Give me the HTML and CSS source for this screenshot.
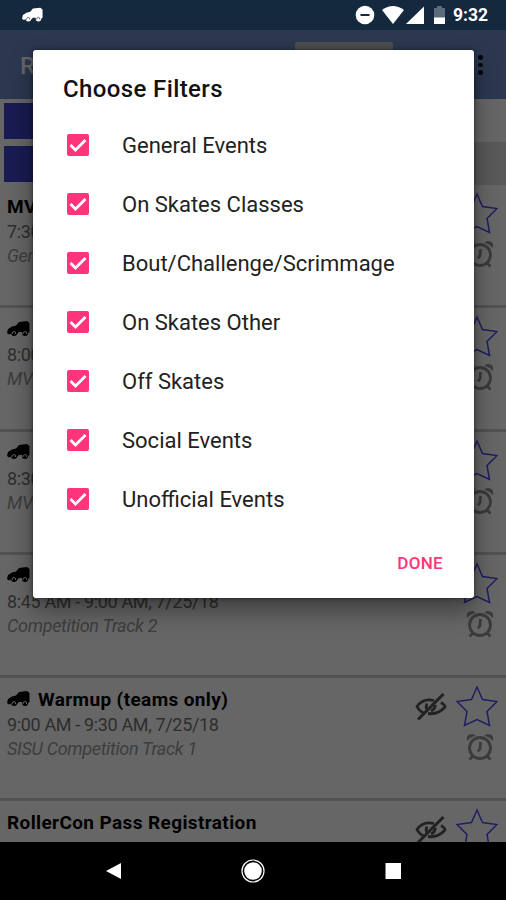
FILE: index.html
```html
<!DOCTYPE html>
<html lang="en">
<head>
  <meta charset="UTF-8">
  <title>RollerCon</title>
  <link rel="stylesheet" href="styles.css">
</head>
<body>

  <!-- Shared icons -->
  <svg class="defs" width="0" height="0">
    <symbol id="car" viewBox="0 0 23 16">
      <path d="M1 8L5 5.500 9 4.500 12 1 20 0 22.500 2V11L20 13H17L15 11H12L9 14 5 12 2 13.500 0 12Z"/>
      <circle cx="7" cy="12" r="3"/><circle cx="18" cy="12" r="3"/>
      <path class="hub" d="M5 13Q5 10.500 7 10.500 9 10.500 8.500 13M16 13Q16 10.500 18 10.500 20 10.500 19.500 13"/>
    </symbol>
    <symbol id="star" viewBox="0 0 42 42">
      <path d="M21 2L26.500 14.500 41 16.500 31 26.500 33.500 40.500 21 34.500 8.500 40.500 11 26.500 1 16.500 15.500 14.500Z"/>
    </symbol>
    <symbol id="alarm" viewBox="0 0 28 28">
      <circle cx="14" cy="15" r="10.500"/>
      <path d="M7 23L3.500 26.500M21 23L24.500 26.500M14.500 9L14 15.500 12 18.500"/>
      <path class="bell" d="M1 8Q0 2 4 1.500 7 0 9.500 2.500 4 4.500 1 8ZM27 8Q28 2 24 1.500 21 0 18.500 2.500 24 4.500 27 8Z"/>
    </symbol>
    <symbol id="hide" viewBox="0 0 32 28">
      <path d="M19 7.500Q8 5 2 13.500 4 18 9 20M26 9.500Q30 12 30 14 23 22 13 20.500M12 10.500Q10 15 13 17M20.500 12Q20 16 16 18"/>
      <path class="slash" d="M28.500 1L3 26.500"/>
    </symbol>
    <symbol id="check" viewBox="0 0 22 22">
      <path d="M3.500 11L8.500 16 18.500 6"/>
    </symbol>
  </svg>

  <div class="phone">
    <div class="status">
      <svg class="status-car" width="21" height="16"><use href="#car"/></svg>
      <svg class="status-icons" width="94" height="20" viewBox="0 0 94 20">
        <circle cx="10" cy="10" r="9.300"/>
        <path class="dnd" d="M5.500 10H14.500"/>
        <path d="M27 5Q38 -3 49 5L38 19Z"/>
        <path d="M69 1.500V19H51Z"/>
        <path class="battery" d="M79 3H82V1H87V3H90V13H79Z"/>
        <path d="M79 12.500H90V19H79Z"/>
      </svg>
      <span class="clock">9:32</span>
    </div>

    <div class="toolbar">
      <span class="app-name">R</span>
      <div class="toolbar-button"></div>
      <div class="dots"><i></i><i></i><i></i></div>
    </div>

    <div class="tab-row"><div class="tab"></div></div>
    <div class="tab-row dark"><div class="tab"></div></div>

    <div class="events">
      <div class="event">
        <div class="info">
          <div class="name">MV</div>
          <div class="time">7:30</div>
          <div class="place">Gen</div>
        </div>
        <div class="actions">
          <svg class="star" width="42" height="42"><use href="#star"/></svg>
          <svg class="alarm" width="28" height="28"><use href="#alarm"/></svg>
        </div>
      </div>
      <div class="event">
        <div class="info">
          <div class="name"><svg class="car" width="23" height="16"><use href="#car"/></svg></div>
          <div class="time">8:00</div>
          <div class="place">MV</div>
        </div>
        <div class="actions">
          <svg class="star" width="42" height="42"><use href="#star"/></svg>
          <svg class="alarm" width="28" height="28"><use href="#alarm"/></svg>
        </div>
      </div>
      <div class="event">
        <div class="info">
          <div class="name"><svg class="car" width="23" height="16"><use href="#car"/></svg></div>
          <div class="time">8:30</div>
          <div class="place">MV</div>
        </div>
        <div class="actions">
          <svg class="star" width="42" height="42"><use href="#star"/></svg>
          <svg class="alarm" width="28" height="28"><use href="#alarm"/></svg>
        </div>
      </div>
      <div class="event">
        <div class="info">
          <div class="name"><svg class="car" width="23" height="16"><use href="#car"/></svg></div>
          <div class="time">8:45 AM - 9:00 AM, 7/25/18</div>
          <div class="place">Competition Track 2</div>
        </div>
        <div class="actions">
          <svg class="star" width="42" height="42"><use href="#star"/></svg>
          <svg class="alarm" width="28" height="28"><use href="#alarm"/></svg>
        </div>
      </div>
      <div class="event">
        <div class="info">
          <div class="name"><svg class="car" width="23" height="16"><use href="#car"/></svg>Warmup (teams only)</div>
          <div class="time">9:00 AM - 9:30 AM, 7/25/18</div>
          <div class="place">SISU Competition Track 1</div>
        </div>
        <svg class="hide" width="32" height="28"><use href="#hide"/></svg>
        <div class="actions">
          <svg class="star" width="42" height="42"><use href="#star"/></svg>
          <svg class="alarm" width="28" height="28"><use href="#alarm"/></svg>
        </div>
      </div>
      <div class="event">
        <div class="info">
          <div class="name">RollerCon Pass Registration</div>
        </div>
        <svg class="hide" width="32" height="28"><use href="#hide"/></svg>
        <div class="actions">
          <svg class="star" width="42" height="42"><use href="#star"/></svg>
        </div>
      </div>
    </div>

    <div class="navbar">
      <svg width="506" height="58" viewBox="0 0 506 58">
        <path d="M106 29L121 21V37Z"/>
        <circle class="ring" cx="253" cy="29" r="11"/>
        <circle cx="253" cy="29" r="8.800"/>
        <path d="M385.500 21H401V37H385.500Z"/>
      </svg>
    </div>
  </div>

  <div class="dialog">
    <h2>Choose Filters</h2>
    <div class="option"><svg class="box" width="22" height="22"><use href="#check"/></svg><span>General Events</span></div>
    <div class="option"><svg class="box" width="22" height="22"><use href="#check"/></svg><span>On Skates Classes</span></div>
    <div class="option"><svg class="box" width="22" height="22"><use href="#check"/></svg><span>Bout/Challenge/Scrimmage</span></div>
    <div class="option"><svg class="box" width="22" height="22"><use href="#check"/></svg><span>On Skates Other</span></div>
    <div class="option"><svg class="box" width="22" height="22"><use href="#check"/></svg><span>Off Skates</span></div>
    <div class="option"><svg class="box" width="22" height="22"><use href="#check"/></svg><span>Social Events</span></div>
    <div class="option"><svg class="box" width="22" height="22"><use href="#check"/></svg><span>Unofficial Events</span></div>
    <div class="done">DONE</div>
  </div>

</body>
</html>
```
FILE: styles.css
```css
* {
  box-sizing: border-box;
}

body {
  margin: 0;
  font-family: Roboto, sans-serif;
  background: #666;
  overflow: hidden;
}

svg {
  display: block;
  flex: none;
}

.defs {
  position: absolute;
}

.phone {
  width: 506px;
  height: 900px;
  display: flex;
  flex-direction: column;
  overflow: hidden;
}

.status {
  height: 30px;
  flex: none;
  display: flex;
  align-items: center;
  padding: 0 16px 0 22px;
  background: #14293d;
}

.status-car {
  fill: #fff;
}

.status-icons {
  margin-left: auto;
  fill: #fff;
}

.dnd {
  stroke: #14293d;
  stroke-width: 2;
}

.battery {
  fill: #5c6c7a;
}

.clock {
  width: 37px;
  margin-left: 4px;
  color: #fff;
  font-size: 17.500px;
  font-weight: 700;
}

.toolbar {
  height: 69px;
  flex: none;
  display: flex;
  background: #2b3850;
}

.app-name {
  width: 295px;
  padding: 22px 0 0 20px;
  color: #666;
  font-size: 24px;
  font-weight: 500;
}

.toolbar-button {
  width: 98px;
  height: 45px;
  margin-top: 12px;
  border-radius: 2px;
  background: #4c4e4d;
}

.dots {
  display: flex;
  flex-direction: column;
  gap: 3px;
  margin: 25px 0 0 85px;
}

.dots i {
  width: 4.500px;
  height: 4.500px;
  border-radius: 50%;
  background: #050608;
}

.tab-row {
  height: 43px;
  flex: none;
  padding: 4px;
}

.tab-row.dark {
  background: linear-gradient(90deg, #666 50%, #595959 50%);
}

.tab {
  width: 160px;
  height: 36px;
  background: #191b52;
}

.events {
  flex: 1;
  min-height: 0;
  overflow: hidden;
}

.event {
  height: 123.300px;
  display: flex;
  padding-left: 7px;
  border-bottom: 3px solid #525252;
}

.info {
  flex: 1;
  padding-top: 9px;
  white-space: nowrap;
}

.name {
  height: 25px;
  display: flex;
  align-items: center;
  line-height: 25px;
  font-size: 19px;
  font-weight: 700;
  letter-spacing: 0.380px;
  color: #000;
}

.car {
  margin: -2px 8px 0 0;
  fill: #000;
}

.hub {
  fill: none;
  stroke: #666;
  stroke-width: 1;
}

.status-car .hub {
  stroke: #14293d;
}

.time {
  line-height: 25px;
  font-size: 18px;
  letter-spacing: -0.350px;
  color: #2e2e2e;
}

.place {
  line-height: 24px;
  font-size: 18px;
  font-style: italic;
  letter-spacing: -0.320px;
  color: #3d3d3d;
}

.hide {
  margin: 15px 9px 0 0;
  fill: none;
  stroke: #222;
  stroke-width: 2.800;
}

.slash {
  stroke-width: 3;
}

.actions {
  width: 50px;
  padding-top: 7px;
}

.star {
  fill: none;
  stroke: #1e1e60;
  stroke-width: 1.500;
}

.alarm {
  margin: 6px 0 0 9.500px;
  fill: none;
  stroke: #3b3b3b;
  stroke-width: 2.800;
}

.bell {
  fill: #3b3b3b;
  stroke: none;
}

.navbar {
  height: 58px;
  flex: none;
  background: #000;
  fill: #fff;
}

.ring {
  fill: none;
  stroke: #fff;
  stroke-width: 1.200;
}

/* Filter dialog on top of the list */
.dialog {
  position: absolute;
  left: 33px;
  top: 50px;
  width: 441px;
  height: 548px;
  border-radius: 3px;
  background: #fff;
  box-shadow: 0 12px 24px rgba(0, 0, 0, 0.4), 0 0 4px rgba(0, 0, 0, 0.5);
}

.dialog h2 {
  height: 65px;
  margin: 0;
  padding: 24px 0 0 30px;
  line-height: 30px;
  font-size: 24px;
  font-weight: 500;
  letter-spacing: 0.380px;
  color: #111;
}

.option {
  height: 59.100px;
  display: flex;
  align-items: center;
  gap: 33px;
  padding-left: 34px;
  font-size: 22px;
  color: #222;
}

.option span {
  padding-top: 1px;
}

.box {
  border-radius: 2px;
  background: #ff347a;
  fill: none;
  stroke: #fff;
  stroke-width: 2.800;
}

.done {
  padding: 22px 31px 0 0;
  text-align: right;
  line-height: 24px;
  font-size: 17px;
  font-weight: 500;
  letter-spacing: 0.300px;
  color: #ff347a;
}
```
